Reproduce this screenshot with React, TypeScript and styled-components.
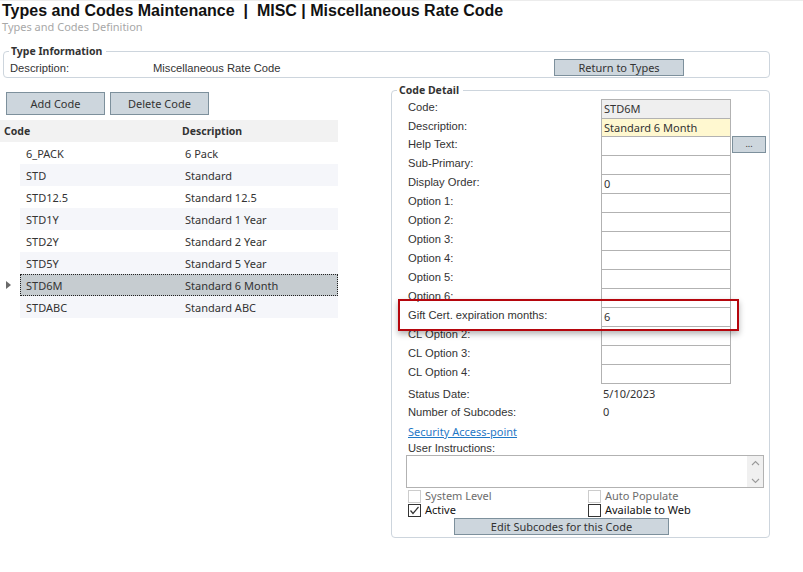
import React from "react";
import styled, { createGlobalStyle } from "styled-components";

const UI = `"Segoe UI", "Noto Sans", sans-serif`;
const SANS = `"Liberation Sans", Arial, sans-serif`;

const GlobalStyle = createGlobalStyle`
  html, body {
    margin: 0;
    padding: 0;
    background: #ffffff;
  }
  body {
    font-family: ${SANS};
    color: #333333;
  }
`;

const Page = styled.div`
  width: 803px;
  height: 572px;
  border-top: 1px solid #ececec;
  box-sizing: border-box;
  overflow: hidden;
`;

const Header = styled.div`
  padding-left: 2px;
`;

const Title = styled.h1`
  margin: 0;
  font-family: ${SANS};
  font-size: 16px;
  font-weight: bold;
  line-height: 19px;
  color: #111111;
  white-space: pre;
`;

const SubTitle = styled.div`
  font-family: ${UI};
  font-size: 11px;
  line-height: 14px;
  color: #a8a8a8;
`;

const Group = styled.fieldset<{ $width: number }>`
  margin: 0;
  padding: 0;
  width: ${(p) => p.$width}px;
  box-sizing: border-box;
  border: 1px solid #cdd5dd;
  border-radius: 4px;
  min-width: 0;
`;

const Legend = styled.legend`
  margin-left: 5px;
  padding: 0 4px 0 2px;
  font-family: ${UI};
  font-size: 10.5px;
  font-weight: bold;
  line-height: 14px;
  color: #333333;
`;

const TypeGroup = styled(Group)`
  margin: 10px 0 0 3px;
`;

const TypeRow = styled.div`
  display: flex;
  align-items: center;
  height: 17px;
  padding: 1px 0 1px 6px;
  font-size: 11.2px;
`;

const TypeLabel = styled.span`
  width: 143px;
`;

const TypeValue = styled.span`
  width: 401px;
`;

const Button = styled.button<{ $w: number; $h: number }>`
  width: ${(p) => p.$w}px;
  height: ${(p) => p.$h}px;
  margin: 0;
  padding: 0;
  background: #cdd6dd;
  border: 1px solid #7d909c;
  font-family: ${UI};
  font-size: 11px;
  color: #333333;
  line-height: 1;
  cursor: pointer;
`;

const Main = styled.div`
  display: flex;
  margin-top: 5px;
`;

const LeftCol = styled.div`
  width: 391px;
  padding-top: 9px;
`;

const ButtonBar = styled.div`
  display: flex;
  gap: 5px;
  padding-left: 6px;
`;

const Grid = styled.div`
  width: 338px;
  margin-top: 5px;
  font-family: ${UI};
  font-size: 11px;
  color: #333333;
`;

const GridHead = styled.div`
  display: flex;
  align-items: center;
  height: 22px;
  background: #f2f2f2;
  font-weight: bold;
  font-size: 10.5px;
`;

const HeadCell = styled.div<{ $w?: number }>`
  ${(p) => (p.$w ? `width: ${p.$w}px;` : "flex: 1;")}
  box-sizing: border-box;
  padding-left: 4px;
`;

const GridRow = styled.div`
  display: flex;
  height: 22px;
`;

const RowHeader = styled.div`
  width: 20px;
  display: flex;
  align-items: center;
  justify-content: center;
`;

const RowCells = styled.div<{ $alt: boolean; $sel: boolean }>`
  flex: 1;
  display: flex;
  align-items: center;
  box-sizing: border-box;
  background: ${(p) => (p.$sel ? "#c6ccd0" : p.$alt ? "#f5f6fa" : "#ffffff")};
  border: 1px ${(p) => (p.$sel ? "dotted #222222" : "solid transparent")};
`;

const Cell = styled.div<{ $w?: number }>`
  ${(p) => (p.$w ? `width: ${p.$w}px;` : "flex: 1;")}
  box-sizing: border-box;
  padding-left: 5px;
  white-space: nowrap;
`;

const Arrow = styled.div`
  width: 0;
  height: 0;
  border-top: 4px solid transparent;
  border-bottom: 4px solid transparent;
  border-left: 5px solid #6a6a6a;
  margin-left: -4px;
`;

const DetailGroup = styled(Group)`
  height: 455px;
`;

const Form = styled.div`
  position: relative;
  padding: 2px 0 0 16px;
  font-size: 11.2px;
`;

const FormRow = styled.div<{ $h?: number }>`
  display: flex;
  align-items: flex-start;
  height: ${(p) => p.$h ?? 19}px;
`;

const FormLabel = styled.div`
  width: 193px;
  line-height: 14px;
  padding-top: 1px;
  white-space: nowrap;
`;

const Input = styled.div<{ $bg?: string }>`
  width: 130px;
  height: 20px;
  box-sizing: border-box;
  border: 1px solid #b2b2b2;
  background: ${(p) => p.$bg ?? "#ffffff"};
  padding: 1px 0 0 2px;
  font-family: ${UI};
  font-size: 11px;
  line-height: 16px;
  color: #333333;
`;

const DotsButton = styled(Button)`
  margin: 0 0 0 1px;
  font-size: 9px;
  padding-bottom: 3px;
`;

const Value = styled.div`
  padding: 1px 0 0 2px;
  line-height: 14px;
  font-family: ${UI};
  font-size: 11px;
`;

const Highlight = styled.div`
  position: absolute;
  left: 6px;
  top: 202px;
  width: 341px;
  height: 32px;
  box-sizing: border-box;
  border: 2px solid #b5060d;
  box-shadow: 0 3px 6px rgba(0, 0, 0, 0.3);
  pointer-events: none;
`;

const LinkText = styled.a`
  display: block;
  margin-top: 2px;
  font-family: ${UI};
  font-size: 11px;
  line-height: 16px;
  color: #1f78c6;
  text-decoration: underline;
`;

const InstrLabel = styled.div`
  line-height: 14px;
  margin-top: 1px;
`;

const TextArea = styled.div`
  display: flex;
  justify-content: flex-end;
  width: 358px;
  height: 33px;
  margin: 0 0 0 -2px;
  box-sizing: border-box;
  border: 1px solid #b2b2b2;
`;

const ScrollBar = styled.div`
  width: 16px;
  background: #f0f0f0;
  display: flex;
  flex-direction: column;
  justify-content: space-between;
  align-items: center;
  padding: 4px 0 3px;
`;

const CheckGrid = styled.div`
  display: grid;
  grid-template-columns: 180px 180px;
  grid-auto-rows: 14px;
  margin-top: 1px;
`;

const CheckItem = styled.label<{ $disabled?: boolean }>`
  display: flex;
  align-items: center;
  gap: 4px;
  font-family: ${UI};
  font-size: 11px;
  line-height: 14px;
  color: ${(p) => (p.$disabled ? "#6d6d6d" : "#111111")};
`;

const Box = styled.span<{ $disabled?: boolean }>`
  display: inline-flex;
  align-items: center;
  justify-content: center;
  width: 13px;
  height: 13px;
  box-sizing: border-box;
  border: 1px solid ${(p) => (p.$disabled ? "#cccccc" : "#333333")};
  background: #ffffff;
`;

const BottomBar = styled.div`
  padding: 1px 0 0 46px;
`;

const rows = [
  ["6_PACK", "6 Pack"],
  ["STD", "Standard"],
  ["STD12.5", "Standard 12.5"],
  ["STD1Y", "Standard 1 Year"],
  ["STD2Y", "Standard 2 Year"],
  ["STD5Y", "Standard 5 Year"],
  ["STD6M", "Standard 6 Month"],
  ["STDABC", "Standard ABC"],
];

const Check = ({ label, checked, disabled }: { label: string; checked?: boolean; disabled?: boolean }) => (
  <CheckItem $disabled={disabled}>
    <Box $disabled={disabled}>
      {checked && (
        <svg width="11" height="11" viewBox="0 0 11 11">
          <path d="M1.5 5.5 L4 8.5 L9.5 2" fill="none" stroke="#333" strokeWidth="1.2" />
        </svg>
      )}
    </Box>
    {label}
  </CheckItem>
);

const Chevron = ({ up }: { up?: boolean }) => (
  <svg width="9" height="6" viewBox="0 0 9 6">
    <path d={up ? "M1 5 L4.5 1.5 L8 5" : "M1 1 L4.5 4.5 L8 1"} fill="none" stroke="#9a9a9a" strokeWidth="1.1" />
  </svg>
);

const fields: [string, string][] = [
  ["Help Text:", ""],
  ["Sub-Primary:", ""],
  ["Display Order:", "0"],
  ["Option 1:", ""],
  ["Option 2:", ""],
  ["Option 3:", ""],
  ["Option 4:", ""],
  ["Option 5:", ""],
  ["Option 6:", ""],
  ["Gift Cert. expiration months:", "6"],
  ["CL Option 2:", ""],
  ["CL Option 3:", ""],
  ["CL Option 4:", ""],
];

export default function App() {
  return (
    <Page>
      <GlobalStyle />
      <Header>
        <Title>{"Types and Codes Maintenance  |  MISC | Miscellaneous Rate Code"}</Title>
        <SubTitle>Types and Codes Definition</SubTitle>
      </Header>

      <TypeGroup $width={767}>
        <Legend>Type Information</Legend>
        <TypeRow>
          <TypeLabel>Description:</TypeLabel>
          <TypeValue>Miscellaneous Rate Code</TypeValue>
          <Button $w={130} $h={17}>Return to Types</Button>
        </TypeRow>
      </TypeGroup>

      <Main>
        <LeftCol>
          <ButtonBar>
            <Button $w={99} $h={23}>Add Code</Button>
            <Button $w={99} $h={23}>Delete Code</Button>
          </ButtonBar>
          <Grid>
            <GridHead>
              <HeadCell $w={178}>Code</HeadCell>
              <HeadCell>Description</HeadCell>
            </GridHead>
            {rows.map(([code, desc], i) => (
              <GridRow key={code}>
                <RowHeader>{code === "STD6M" && <Arrow />}</RowHeader>
                <RowCells $alt={i % 2 === 1} $sel={code === "STD6M"}>
                  <Cell $w={159}>{code}</Cell>
                  <Cell>{desc}</Cell>
                </RowCells>
              </GridRow>
            ))}
          </Grid>
        </LeftCol>

        <DetailGroup $width={379}>
          <Legend>Code Detail</Legend>
          <Form>
            <FormRow $h={19}>
              <FormLabel>Code:</FormLabel>
              <Input $bg="#efefef">STD6M</Input>
            </FormRow>
            <FormRow $h={18}>
              <FormLabel>Description:</FormLabel>
              <Input $bg="#fff8d0">Standard 6 Month</Input>
            </FormRow>
            {fields.map(([label, value]) => (
              <FormRow key={label}>
                <FormLabel>{label}</FormLabel>
                <Input>{value}</Input>
                {label === "Help Text:" && (
                  <DotsButton $w={34} $h={17}>...</DotsButton>
                )}
              </FormRow>
            ))}
            <FormRow $h={18} style={{ marginTop: 3 }}>
              <FormLabel>Status Date:</FormLabel>
              <Value>5/10/2023</Value>
            </FormRow>
            <FormRow $h={18}>
              <FormLabel>Number of Subcodes:</FormLabel>
              <Value>0</Value>
            </FormRow>
            <LinkText href="#">Security Access-point</LinkText>
            <InstrLabel>User Instructions:</InstrLabel>
            <TextArea>
              <ScrollBar>
                <Chevron up />
                <Chevron />
              </ScrollBar>
            </TextArea>
            <CheckGrid>
              <Check label="System Level" disabled />
              <Check label="Auto Populate" disabled />
              <Check label="Active" checked />
              <Check label="Available to Web" />
            </CheckGrid>
            <BottomBar>
              <Button $w={215} $h={17}>Edit Subcodes for this Code</Button>
            </BottomBar>
            <Highlight />
          </Form>
        </DetailGroup>
      </Main>
    </Page>
  );
}
